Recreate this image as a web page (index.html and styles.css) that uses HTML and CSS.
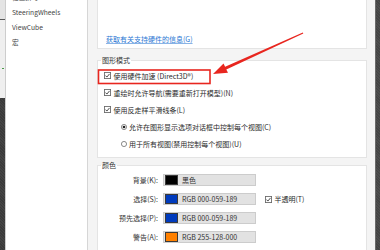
FILE: index.html
```html
<!DOCTYPE html>
<html lang="zh">
<head>
<meta charset="utf-8">
<link rel="stylesheet" href="styles.css">
</head>
<body>
<div class="screen">
  <div class="edge-left">
    <div class="edge-top"></div>
    <div class="edge-mid"><span class="tick"></span></div>
    <div class="edge-dark"></div>
  </div>
  <nav class="nav">
    <ul>
      <li>检查拼写</li>
      <li>SteeringWheels</li>
      <li>ViewCube</li>
      <li>宏</li>
    </ul>
  </nav>
  <main class="pane">
    <div class="group group-hw">
      <a class="link" href="#">获取有关支持硬件的信息(G)</a>
    </div>
    <fieldset class="group group-mode">
      <legend>图形模式</legend>
      <div class="opts">
        <label class="opt"><svg class="cb" viewBox="0 0 8 8"><rect x="0.5" y="0.5" width="7" height="7"/><path d="M1.7 4.1 L3.3 5.8 L6.3 2.2"/></svg>使用硬件加速 (Direct3D®)</label>
        <label class="opt"><svg class="cb" viewBox="0 0 8 8"><rect x="0.5" y="0.5" width="7" height="7"/><path d="M1.7 4.1 L3.3 5.8 L6.3 2.2"/></svg>重绘时允许导航(需要重新打开模型)(N)</label>
        <label class="opt"><svg class="cb" viewBox="0 0 8 8"><rect x="0.5" y="0.5" width="7" height="7"/><path d="M1.7 4.1 L3.3 5.8 L6.3 2.2"/></svg>使用反走样平滑线条(L)</label>
        <label class="opt sub"><svg class="rb" viewBox="0 0 7 7"><circle cx="3.5" cy="3.5" r="3"/><circle class="dot" cx="3.5" cy="3.5" r="1.6"/></svg>允许在图形显示选项对话框中控制每个视图(C)</label>
        <label class="opt sub"><svg class="rb" viewBox="0 0 7 7"><circle cx="3.5" cy="3.5" r="3"/></svg>用于所有视图(禁用控制每个视图)(U)</label>
      </div>
    </fieldset>
    <fieldset class="group group-color">
      <legend>颜色</legend>
      <div class="colors">
        <span class="clabel">背景(K):</span>
        <span class="cfield"><i class="sw sw-black"></i>黑色</span>
        <span></span>
        <span class="clabel">选择(S):</span>
        <span class="cfield"><i class="sw sw-blue"></i>RGB 000-059-189</span>
        <label class="opt"><svg class="cb" viewBox="0 0 8 8"><rect x="0.5" y="0.5" width="7" height="7"/><path d="M1.7 4.1 L3.3 5.8 L6.3 2.2"/></svg>半透明(T)</label>
        <span class="clabel">预先选择(P):</span>
        <span class="cfield"><i class="sw sw-blue"></i>RGB 000-059-189</span>
        <span></span>
        <span class="clabel">警告(A):</span>
        <span class="cfield"><i class="sw sw-orange"></i>RGB 255-128-000</span>
        <span></span>
      </div>
    </fieldset>
  </main>
  <div class="edge-right"></div>
  <svg class="annot" viewBox="0 0 380 250">
    <rect class="hl" x="98.5" y="70" width="111.5" height="13.5"/>
    <polygon class="arrow" points="303.3,33.5 226.3,69.6 228,72.8 213,74 223.5,63.6 225.1,66.8 302.8,32.5"/>
  </svg>
</div>
</body>
</html>
```

FILE: styles.css
```css
* { box-sizing: border-box; }
html, body {
  margin: 0;
  padding: 0;
  width: 380px;
  height: 250px;
  overflow: hidden;
  background: #f3f3f3;
}
body {
  font-family: "Noto Sans CJK SC", "Noto Sans", sans-serif;
  font-size: 7px;
  color: #2a2a2a;
}
.screen {
  position: relative;
  display: flex;
  width: 380px;
  height: 250px;
  overflow: hidden;
}
.edge-left {
  width: 6px;
  flex: none;
  display: flex;
  flex-direction: column;
  border-right: 1px solid #cdcdcd;
}
.edge-top {
  height: 20px;
  background: #e4e4e4;
  border-bottom: 1px solid #5a5a5a;
}
.edge-mid {
  height: 78px;
  background: #efefef;
  padding-top: 48px;
}
.tick {
  display: block;
  width: 2px;
  height: 1px;
  margin-left: 2px;
  background: #4a9a48;
}
.edge-dark {
  flex: 1;
  background: repeating-linear-gradient(45deg, #3a3a3a 0 1px, #444 1px 2px);
}
.nav {
  width: 82px;
  flex: none;
  background: #fff;
  border-right: 1px solid #d6d6d6;
}
.nav ul {
  list-style: none;
  margin: -10px 0 0;
  padding: 0 0 0 6px;
}
.nav li {
  line-height: 15px;
  height: 15px;
  font-size: 6.7px;
  color: #444;
}
.pane {
  flex: 1;
  padding: 0 8px 0 9px;
  background: #f4f4f4;
}
.group {
  background: #fff;
  border: 1px solid #e4e4e4;
  margin: 0;
  min-width: 0;
}
.group-hw {
  margin-top: -5px;
  padding: 38px 0 4px 8px;
}
.link {
  display: block;
  line-height: 10px;
  color: #2b78d4;
  text-decoration: underline;
  text-decoration-color: #8ab4e6;
}
fieldset.group {
  padding: 0;
}
legend {
  padding: 0 1px;
  margin-left: 3px;
  line-height: 10px;
  font-size: 7px;
  color: #333;
}
.group-mode {
  margin-top: 6px;
}
.opts {
  padding: 2px 0 5px 6px;
}
.opt {
  display: flex;
  align-items: center;
  gap: 2.5px;
  height: 17px;
  white-space: nowrap;
}
.opt.sub {
  padding-left: 17px;
  gap: 2px;
}
.cb {
  width: 7px;
  height: 7px;
  flex: none;
}
.cb rect {
  fill: #fff;
  stroke: #6a6a6a;
  stroke-width: 1;
}
.cb path {
  fill: none;
  stroke: #333;
  stroke-width: 1;
}
.rb {
  width: 6px;
  height: 6px;
  flex: none;
}
.rb circle {
  fill: #fff;
  stroke: #6a6a6a;
  stroke-width: 0.9;
}
.rb .dot {
  fill: #222;
  stroke: none;
}
.group-color {
  margin-top: 2px;
  height: 120px;
}
.colors {
  display: grid;
  grid-template-columns: 60px 93px auto;
  column-gap: 5px;
  row-gap: 6px;
  grid-auto-rows: 13px;
  padding-top: 3.5px;
  align-items: center;
}
.colors .opt {
  height: 13px;
  margin-left: 4px;
}
.clabel {
  text-align: right;
  color: #333;
}
.cfield {
  display: flex;
  align-items: center;
  gap: 4px;
  height: 12px;
  padding-left: 1px;
  background: #e2e2e2;
  border: 1px solid #cccccc;
  color: #333;
}
.sw {
  display: block;
  width: 13px;
  height: 10px;
  border: 1px solid #3a3a3a;
}
.sw-black { background: #000; }
.sw-blue { background: #003bbd; }
.sw-orange { background: #ff8000; }
.edge-right {
  width: 5px;
  flex: none;
  background: repeating-linear-gradient(45deg, #444 0 1px, #4e4e4e 1px 2px);
  border-left: 1px solid #6a6a6a;
}
.annot {
  position: absolute;
  left: 0;
  top: 0;
  width: 380px;
  height: 250px;
  pointer-events: none;
}
.hl {
  fill: none;
  stroke: #e8261f;
  stroke-width: 1.6;
}
.arrow {
  fill: #e8261f;
}
```
